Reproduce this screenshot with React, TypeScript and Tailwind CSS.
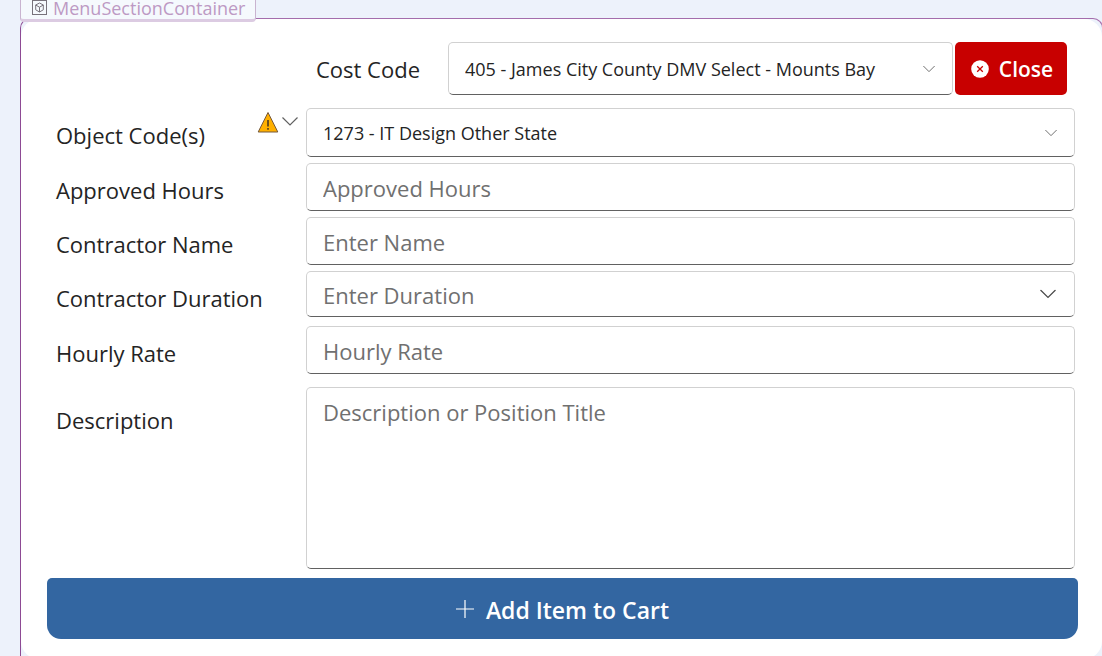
import React from "react";

function Chevron({ className }: { className: string }) {
  return (
    <svg viewBox="0 0 16 9" fill="none" stroke="currentColor" aria-hidden="true" className={className}>
      <path d="M0.5 0.5 L8 8 L15.5 0.5" strokeWidth="1.2" />
    </svg>
  );
}

const box =
  "w-full rounded-[5px] border border-[#d1d1d1] border-b-[#616161] bg-white px-4 outline-none";
const labelText = "text-[22px] leading-7 text-[#242424]";
const fieldText = "text-[22px] leading-7 placeholder:text-[#707070] placeholder:opacity-100";

function Row({ id, label, children, extra, labelPad = "pt-[13px]" }: { id: string; label: string; children: React.ReactNode; extra?: React.ReactNode; labelPad?: string }) {
  return (
    <div className="flex">
      <div className="flex w-[250px] shrink-0 items-start justify-between pr-2">
        <label htmlFor={id} className={`whitespace-nowrap ${labelPad} ${labelText}`}>
          {label}
        </label>
        {extra}
      </div>
      <div className="min-w-0 flex-1">{children}</div>
    </div>
  );
}

function SelectBox({ id, value, className, iconClass }: { id: string; value: string; className: string; iconClass: string }) {
  return (
    <div className="relative">
      <select id={id} className={`block appearance-none ${box} ${className}`}>
        <option>{value}</option>
      </select>
      <Chevron className={`pointer-events-none absolute top-1/2 -translate-y-1/2 ${iconClass}`} />
    </div>
  );
}

export default function App() {
  return (
    <div className="relative h-screen overflow-hidden bg-[#edf2fb] pt-[18px] pl-5 font-['Open_Sans','Noto_Sans',sans-serif]">
      <div className="-mr-px min-h-screen rounded-[10px] border border-[#a46dac] border-l-[#8d4a94]">
        <form
          className="rounded-[18px] bg-white pt-[23px] pr-6 pb-5 pl-[26px]"
          onSubmit={(e) => e.preventDefault()}
        >
          <div className="flex items-center justify-end pr-[11px]">
            <label htmlFor="cost" className={`mr-7 ${labelText}`}>
              Cost Code
            </label>
            <div className="w-[505px]">
              <SelectBox
                id="cost"
                value="405 - James City County DMV Select - Mounts Bay"
                className="h-[53px] pt-px text-[18px] text-[#242424]"
                iconClass="right-[18px] h-[7px] w-3 text-[#616161]"
              />
            </div>
            <button
              type="button"
              className="ml-0.5 flex h-[53px] w-28 items-center justify-center gap-2.5 rounded-[5px] bg-[#c80000] pl-0.5 text-[21px] font-semibold text-white"
            >
              <svg viewBox="0 0 18 18" aria-hidden="true" className="size-[18px]">
                <circle cx="9" cy="9" r="8.8" fill="white" />
                <path d="M6.2 6.2 L11.8 11.8 M11.8 6.2 L6.2 11.8" stroke="#c80000" strokeWidth="1.3" />
              </svg>
              <span className="pt-0.5">Close</span>
            </button>
          </div>

          <div className="mt-[13px] flex flex-col gap-1.5 pr-[3px] pl-[9px]">
            <Row
              id="object"
              label="Object Code(s)"
              extra={
                <span className="flex items-start gap-[3px] pt-[3px]">
                  <svg viewBox="0 0 22 22" role="img" aria-label="Warning" className="size-[22px]">
                    <path d="M11 1.5 L20.8 21 L1.2 21 Z" fill="#ffb000" stroke="#75583a" strokeWidth="1" />
                    <path d="M11 9 V15.5 M11 17 V18.8" stroke="#4a3a20" strokeWidth="1.6" />
                  </svg>
                  <Chevron className="mt-1.5 h-[9px] w-4 text-[#616161]" />
                </span>
              }
            >
              <SelectBox
                id="object"
                value="1273 - IT Design Other State"
                className="h-[49px] pt-px text-[18px] text-[#242424]"
                iconClass="right-[18px] h-[7px] w-3 text-[#616161]"
              />
            </Row>
            <Row id="hours" label="Approved Hours">
              <input id="hours" placeholder="Approved Hours" className={`block h-12 pt-px ${box} ${fieldText}`} />
            </Row>
            <Row id="name" label="Contractor Name">
              <input id="name" placeholder="Enter Name" className={`block h-12 pt-px ${box} ${fieldText}`} />
            </Row>
            <Row id="duration" label="Contractor Duration">
              <div className="h-[49px]">
                <SelectBox
                  id="duration"
                  value="Enter Duration"
                  className="h-[46px] pt-[3px] text-[22px] text-[#707070]"
                  iconClass="right-[18px] h-[9px] w-[18px] text-[#484848]"
                />
              </div>
            </Row>
            <Row id="rate" label="Hourly Rate">
              <input id="rate" placeholder="Hourly Rate" className={`block h-12 pt-px ${box} ${fieldText}`} />
            </Row>
            <div className="mt-[7px]">
              <Row id="description" label="Description" labelPad="pt-[19px]">
                <textarea
                  id="description"
                  placeholder="Description or Position Title"
                  className={`block h-[182px] resize-none pt-2.5 ${box} ${fieldText}`}
                />
              </Row>
            </div>
          </div>

          <button
            type="submit"
            className="mt-[9px] flex h-[61px] w-full items-center justify-center gap-3 rounded-t-[5px] rounded-b-[14px] bg-[#3366a1] text-[23px] font-semibold text-white"
          >
            <svg viewBox="0 0 18 18" aria-hidden="true" className="size-[18px]">
              <path d="M9 0 V18 M0 9 H18" stroke="white" strokeWidth="1.2" />
            </svg>
            <span className="pt-[3px]">Add Item to Cart</span>
          </button>
        </form>
      </div>

      <div className="absolute top-0 left-5 flex h-[22px] w-[236px] items-start gap-1.5 rounded-b-[4px] border border-t-0 border-b-[3px] border-[#c9b4d0] border-b-[#dccbe2] bg-[#f5f9fd] pl-[11px]">
        <svg viewBox="0 0 15 15" fill="none" stroke="#77727b" aria-hidden="true" className="size-[15px]">
          <rect x="0.5" y="0.5" width="14" height="14" />
          <path d="M7.5 3 L11.3 5 V9.8 L7.5 12 L3.7 9.8 V5 Z M3.7 5 L7.5 7.2 L11.3 5 M7.5 7.2 V12" />
        </svg>
        <span className="text-[18px] leading-4 text-[#bd9ac4]">MenuSectionContainer</span>
      </div>
    </div>
  );
}
